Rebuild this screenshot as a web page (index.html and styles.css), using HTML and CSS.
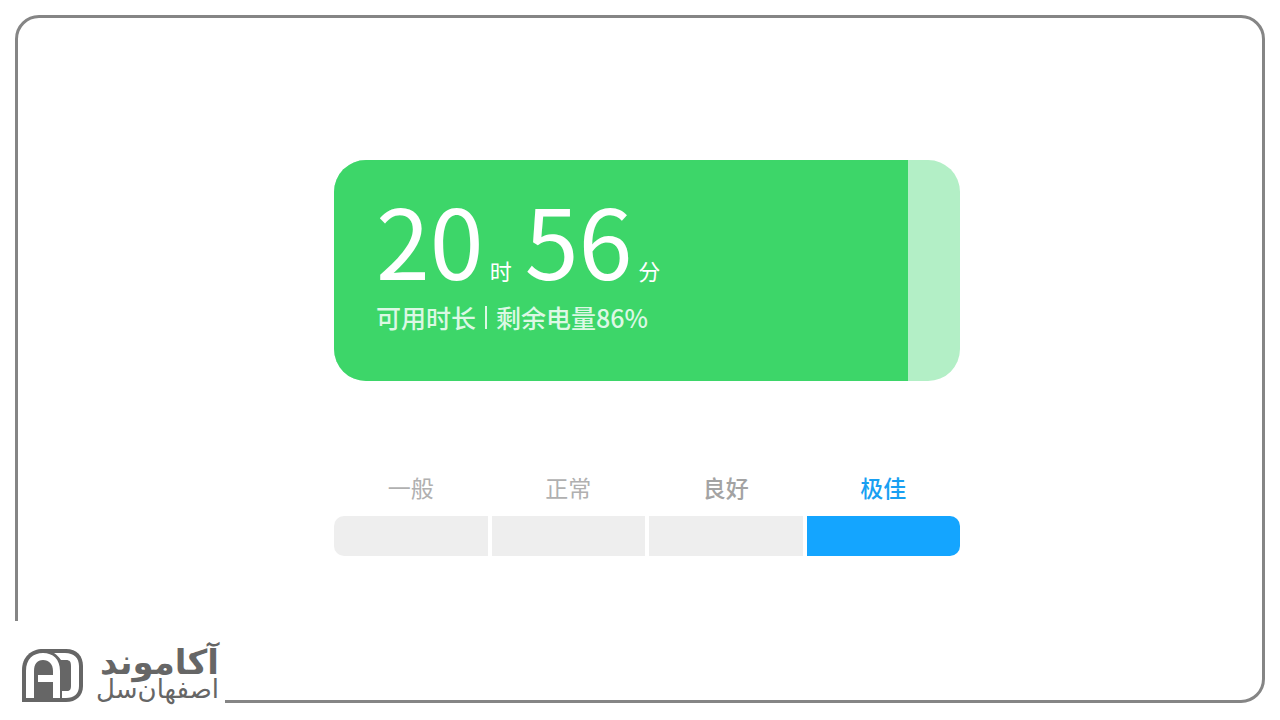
FILE: index.html
```
<!DOCTYPE html>
<html lang="zh-CN">
<head>
<meta charset="utf-8">
<meta name="viewport" content="width=device-width, initial-scale=1">
<title>可用时长</title>
<link rel="stylesheet" href="styles.css">
</head>
<body>
<div class="frame">
  <main class="panel">
    <section class="battery">
      <div class="charge" style="width: 91.7%">
        <div class="time">
          <span class="number">20</span><span class="unit">时</span>
          <span class="number">56</span><span class="unit">分</span>
        </div>
        <p class="caption">可用时长<span class="divider"></span>剩余电量86%</p>
      </div>
    </section>
    <ul class="levels">
      <li class="level"><span class="label">一般</span><span class="bar"></span></li>
      <li class="level"><span class="label">正常</span><span class="bar"></span></li>
      <li class="level good"><span class="label">良好</span><span class="bar"></span></li>
      <li class="level best"><span class="label">极佳</span><span class="bar"></span></li>
    </ul>
  </main>
  <div class="brand">
    <svg class="mark" viewBox="0 0 61 53" aria-hidden="true">
      <path fill="#666" d="M0 53V21C0 8 9 0 21 0H44C55 0 61 7 61 17V37C61 47 54 53 44 53Z"/>
      <path fill="#fff" d="M4 49V22C4 10 11 4 21 4S38 10 38 22V49H31V33H16V26H31V22C31 15 27 11 21 11S12 15 12 22V49Z"/>
      <path fill="#fff" d="M32 4H43C52 4 57 9 57 17V37C57 45 52 49 44 49H40V42H45C48 42 49 40 49 37V17C49 13 48 11 44 11H39C37 8 35 6 32 4Z"/>
    </svg>
    <div class="names" lang="fa" dir="rtl">
      <span class="name">آکاموند</span>
      <span class="city">اصفهان‌سل</span>
    </div>
  </div>
</div>
</body>
</html>
```
FILE: styles.css
```
* {
  box-sizing: border-box;
}

body {
  margin: 0;
  padding: 15px 15px 17px;
  background: #fff;
  font-family: "Noto Sans CJK SC", sans-serif;
}

.frame {
  position: relative;
  display: flex;
  justify-content: center;
  min-height: calc(100vh - 32px);
  padding: 142px 0 0 14px;
  border: 3px solid #858585;
  border-radius: 24px;
}

.panel {
  width: 100%;
  max-width: 626px;
}

.battery {
  overflow: hidden;
  border-radius: 32px;
  background: #b3efc6;
}

.charge {
  padding: 28px 42px 48px;
  background: #3dd669;
  color: #fff;
}

.time {
  display: flex;
  align-items: baseline;
}

.number {
  font-size: 97px;
  line-height: 100px;
}

.unit {
  margin: 0 13px 0 6px;
  font-size: 22px;
  line-height: 32px;
}

.caption {
  display: flex;
  align-items: center;
  margin: 13px 0 0;
  color: #dcf8e4;
  font-size: 25px;
  font-weight: 500;
  line-height: 32px;
}

.divider {
  width: 2px;
  height: 23px;
  margin: 0 9px;
  background: currentColor;
}

.levels {
  display: flex;
  gap: 4px;
  margin: 90px 0 0;
  padding: 0;
  list-style: none;
}

.level {
  flex: 1;
  color: #b0b0b0;
  font-size: 23px;
  line-height: 32px;
  text-align: center;
}

.label {
  display: block;
  margin-bottom: 13px;
}

.bar {
  display: block;
  height: 40px;
  background: #eee;
}

.level:first-child .bar {
  border-radius: 10px 0 0 10px;
}

.level:last-child .bar {
  border-radius: 0 10px 10px 0;
}

.good {
  color: #a3a3a3;
  font-weight: 500;
}

.best {
  color: #189ff2;
  font-weight: 500;
}

.best .bar {
  background: #14a5ff;
}

.brand {
  position: absolute;
  left: -18px;
  bottom: -20px;
  display: flex;
  align-items: flex-end;
  gap: 10px;
  height: 99px;
  padding: 0 6px 18px 22px;
  background: #fff;
}

.mark {
  width: 61px;
  height: 53px;
}

.names {
  display: flex;
  flex-direction: column;
  width: 126px;
  color: #666;
  font-family: "DejaVu Sans", sans-serif;
  white-space: nowrap;
}

.name {
  font-size: 34px;
  font-weight: 700;
  line-height: 28px;
}

.city {
  font-size: 26px;
  line-height: 26px;
}
```
